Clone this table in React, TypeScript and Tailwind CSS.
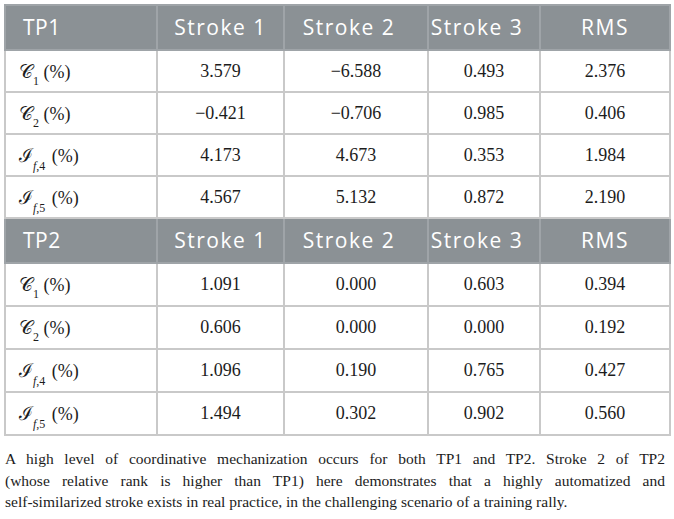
import React from "react";

const serif = { fontFamily: '"Liberation Serif", "DejaVu Serif", serif' };

type Label = { sym: "C" | "I"; sub: string };

const block1: [Label, string[]][] = [
  [{ sym: "C", sub: "1" }, ["3.579", "−6.588", "0.493", "2.376"]],
  [{ sym: "C", sub: "2" }, ["−0.421", "−0.706", "0.985", "0.406"]],
  [{ sym: "I", sub: "4" }, ["4.173", "4.673", "0.353", "1.984"]],
  [{ sym: "I", sub: "5" }, ["4.567", "5.132", "0.872", "2.190"]],
];
const block2: [Label, string[]][] = [
  [{ sym: "C", sub: "1" }, ["1.091", "0.000", "0.603", "0.394"]],
  [{ sym: "C", sub: "2" }, ["0.606", "0.000", "0.000", "0.192"]],
  [{ sym: "I", sub: "4" }, ["1.096", "0.190", "0.765", "0.427"]],
  [{ sym: "I", sub: "5" }, ["1.494", "0.302", "0.902", "0.560"]],
];

function LabelCell({ l }: { l: Label }) {
  return (
    <span className="whitespace-nowrap">
      <span className="font-[DejaVu_Serif] text-[19px]">{l.sym === "C" ? "𝒞" : "ℐ"}</span>
      {l.sym === "C" ? (
        <sub className="text-[12px] align-[-4px]">{l.sub}</sub>
      ) : (
        <sub className="mr-[2px] text-[12px] align-[-5px]">
          <i>f</i>,{l.sub}
        </sub>
      )}{" "}
      (%)
    </span>
  );
}

function Header({ title }: { title: string }) {
  const cols = ["Stroke 1", "Stroke 2", "Stroke 3", "RMS"];
  return (
    <tr className="h-[45px] bg-[#8b9195] text-white">
      <td
        className="border-2 border-[#9fa4a8] pl-[17px] text-left text-[21px] tracking-[0.5px]"
        style={{ fontFamily: '"Open Sans", sans-serif' }}
      >
        {title}
      </td>
      {cols.map((c, i) => (
        <td
          key={c}
          className={
            "border-2 border-[#9fa4a8] text-center text-[21px] tracking-[1.5px] " +
            (i === 1 || i === 2 ? "pr-[14px]" : "")
          }
          style={{ fontFamily: '"Open Sans", sans-serif' }}
        >
          {c}
        </td>
      ))}
    </tr>
  );
}

function Rows({ data, h }: { data: [Label, string[]][]; h: string }) {
  return (
    <>
      {data.map(([l, vals], i) => (
        <tr key={i} className={h + " text-[18px] text-[#1c1c1c]"} style={serif}>
          <td className="border-2 border-[#c9c9c9] pl-[13px] text-left">
            <LabelCell l={l} />
          </td>
          {vals.map((v, j) => (
            <td key={j} className="border-2 border-[#c9c9c9] text-center">
              {v}
            </td>
          ))}
        </tr>
      ))}
    </>
  );
}

export default function App() {
  return (
    <div className="w-[674px] h-[519px] bg-white pt-[4px] pl-[4px]">
      <table className="w-[665px] table-fixed border-collapse">
        <colgroup>
          <col className="w-[152px]" />
          <col className="w-[127px]" />
          <col className="w-[144px]" />
          <col className="w-[112px]" />
          <col className="w-[130px]" />
        </colgroup>
        <tbody>
          <Header title="TP1" />
          <Rows data={block1} h="h-[42px]" />
          <Header title="TP2" />
          <Rows data={block2} h="h-[43px]" />
        </tbody>
      </table>
      <div
        className="mt-[12px] w-[661px] pl-[1px] text-[15.5px] leading-[21.5px] text-[#1c1c1c]"
        style={serif}
      >
        <div className="whitespace-nowrap text-justify [text-align-last:justify]">
          A high level of coordinative mechanization occurs for both TP1 and TP2. Stroke 2 of TP2
        </div>
        <div className="whitespace-nowrap text-justify [text-align-last:justify]">
          (whose relative rank is higher than TP1) here demonstrates that a highly automatized and
        </div>
        <div className="whitespace-nowrap">
          self-similarized stroke exists in real practice, in the challenging scenario of a training rally.
        </div>
      </div>
    </div>
  );
}
